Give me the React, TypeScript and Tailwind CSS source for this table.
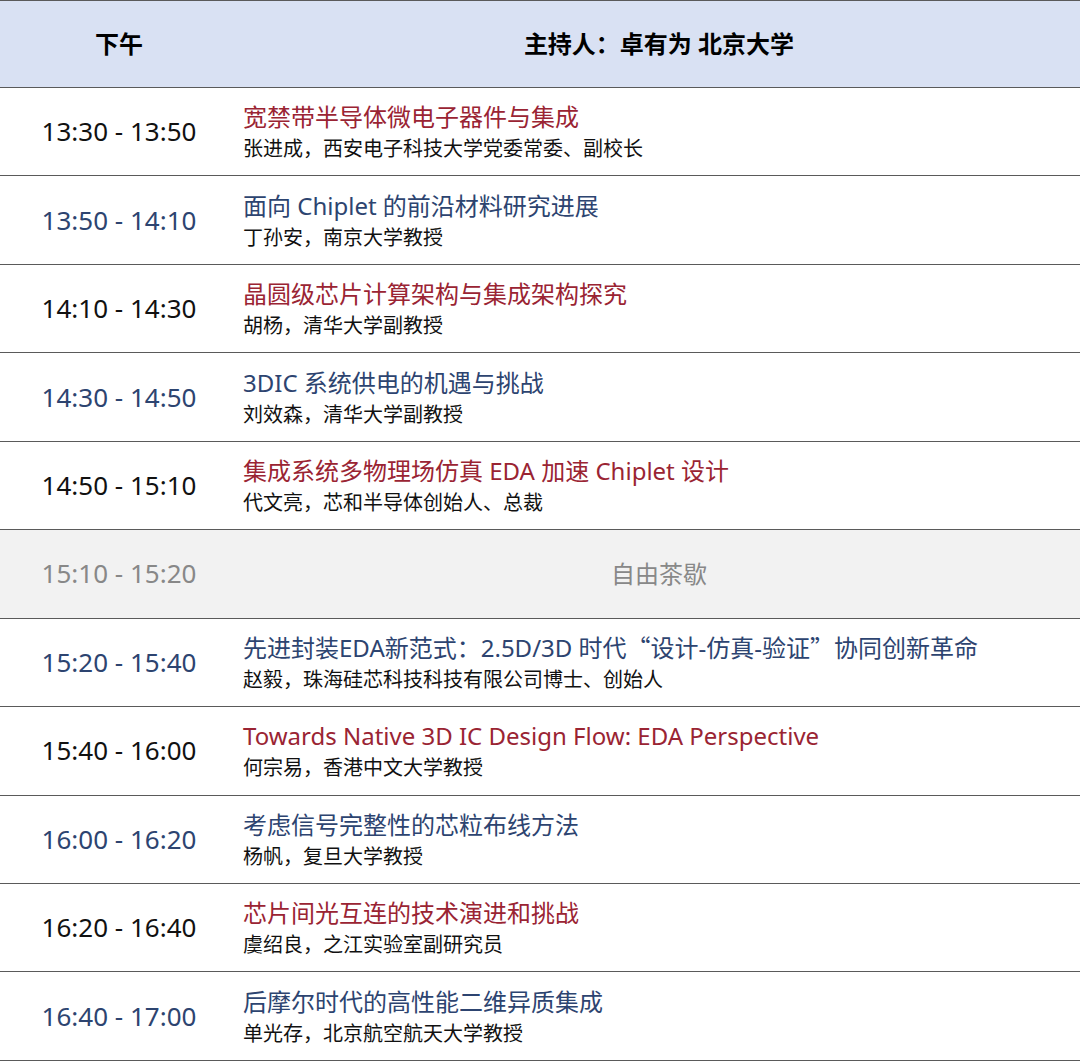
const FONT = { fontFamily: '"Noto Sans", "Noto Sans CJK SC", sans-serif' };
const CJK = { fontFamily: '"Noto Sans CJK SC", sans-serif' };

type Row = {
  time: string;
  title: React.ReactNode;
  speaker: string;
  tone: "red" | "blue";
};

const rows: Row[] = [
  { time: "13:30 - 13:50", title: "宽禁带半导体微电子器件与集成", speaker: "张进成，西安电子科技大学党委常委、副校长", tone: "red" },
  { time: "13:50 - 14:10", title: "面向 Chiplet 的前沿材料研究进展", speaker: "丁孙安，南京大学教授", tone: "blue" },
  { time: "14:10 - 14:30", title: "晶圆级芯片计算架构与集成架构探究", speaker: "胡杨，清华大学副教授", tone: "red" },
  { time: "14:30 - 14:50", title: "3DIC 系统供电的机遇与挑战", speaker: "刘效森，清华大学副教授", tone: "blue" },
  { time: "14:50 - 15:10", title: "集成系统多物理场仿真 EDA 加速 Chiplet 设计", speaker: "代文亮，芯和半导体创始人、总裁", tone: "red" },
];

const rows2: Row[] = [
  {
    time: "15:20 - 15:40",
    title: (
      <>
        先进封装EDA新范式：2.5D/3D 时代<span style={CJK}>“</span>设计-仿真-验证<span style={CJK}>”</span>协同创新革命
      </>
    ),
    speaker: "赵毅，珠海硅芯科技科技有限公司博士、创始人",
    tone: "blue",
  },
  { time: "15:40 - 16:00", title: "Towards Native 3D IC Design Flow: EDA Perspective", speaker: "何宗易，香港中文大学教授", tone: "red" },
  { time: "16:00 - 16:20", title: "考虑信号完整性的芯粒布线方法", speaker: "杨帆，复旦大学教授", tone: "blue" },
  { time: "16:20 - 16:40", title: "芯片间光互连的技术演进和挑战", speaker: "虞绍良，之江实验室副研究员", tone: "red" },
  { time: "16:40 - 17:00", title: "后摩尔时代的高性能二维异质集成", speaker: "单光存，北京航空航天大学教授", tone: "blue" },
];

function TalkRow({ row }: { row: Row }) {
  const red = row.tone === "red";
  return (
    <div className="flex h-[88.45px] items-center border-b border-[#5a5a5a]">
      <div
        className={
          red
            ? "w-[238px] shrink-0 text-center text-[26px] text-[#111]"
            : "w-[238px] shrink-0 text-center text-[26px] text-[#2d4470]"
        }
      >
        {row.time}
      </div>
      <div className="flex flex-col pl-[5px] pt-[3px]">
        <div className={red ? "text-[24px] leading-[32px] text-[#9a2433]" : "text-[24px] leading-[32px] text-[#2d4470]"}>
          {row.title}
        </div>
        <div className="text-[20px] leading-[32px] text-[#111]">{row.speaker}</div>
      </div>
    </div>
  );
}

export default function App() {
  return (
    <div className="h-[1063px] w-[1080px] bg-white" style={FONT}>
      <div className="flex h-[88px] items-center border-b border-t border-[#5a5a5a] bg-[#d9e1f3] text-[24px] font-bold text-black">
        <div className="w-[238px] shrink-0 text-center">下午</div>
        <div className="flex-1 text-center">主持人：卓有为 北京大学</div>
      </div>
      {rows.map((r) => (
        <TalkRow key={r.time} row={r} />
      ))}
      <div className="flex h-[88.45px] items-center border-b border-[#5a5a5a] bg-[#f2f2f2] text-[#888]">
        <div className="w-[238px] shrink-0 text-center text-[26px]">15:10 - 15:20</div>
        <div className="flex-1 text-center text-[24px]">自由茶歇</div>
      </div>
      {rows2.map((r) => (
        <TalkRow key={r.time} row={r} />
      ))}
    </div>
  );
}
